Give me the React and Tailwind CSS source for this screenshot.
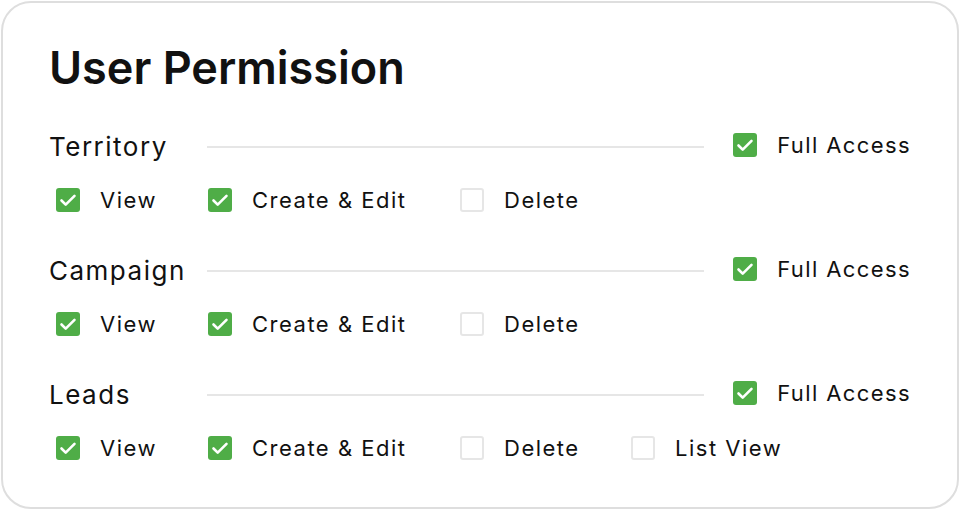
import React from "react";

const sections = [
  { name: "Territory", perms: [["View", true], ["Create & Edit", true], ["Delete", false]] },
  { name: "Campaign", perms: [["View", true], ["Create & Edit", true], ["Delete", false]] },
  { name: "Leads", perms: [["View", true], ["Create & Edit", true], ["Delete", false], ["List View", false]] },
];

// 項目ごとの幅（チェックボックスの開始位置をそろえる）
const itemWidths = ["w-[152px]", "w-[252px]", "w-[171px]", "w-[160px]"];

const Check = ({ on }) =>
  on ? (
    <span className="flex h-6 w-6 shrink-0 items-center justify-center rounded-[3px] bg-[#4fad47]">
      <svg width="24" height="24" viewBox="0 0 24 24" fill="none">
        <path d="M5.5 12.5l4.2 4.2 8.8-8.8" stroke="#fff" strokeWidth="2.6" strokeLinecap="round" strokeLinejoin="round" />
      </svg>
    </span>
  ) : (
    <span className="h-6 w-6 shrink-0 rounded-[3px] border-2 border-[#e6e6e6] bg-white" />
  );

export default function App() {
  return (
    <div className="h-[510px] w-[960px] bg-white p-px font-['Inter',sans-serif] text-[#111]">
      <div className="h-full rounded-[30px] border-2 border-[#dedede] pl-[46px] pr-[46px] pt-[40px]">
        <h1 className="h-[50px] text-[45px] font-semibold leading-[50px]">User Permission</h1>
        {sections.map((s, i) => (
          <div key={s.name} className={i === 0 ? "mt-[39px]" : "mt-[44px]"}>
            <div className="flex h-[30px] items-center">
              <div className="w-[158px] text-[26px] leading-[30px] tracking-[1.5px]">{s.name}</div>
              <div className="h-[2px] flex-1 bg-[#e6e6e6]" />
              <div className="mb-[4px] ml-[29px] flex items-center gap-5">
                <Check on />
                <span className="text-[22px] leading-[26px] tracking-[1.4px]">Full Access</span>
              </div>
            </div>
            <div className="mt-[26px] flex h-6 items-center pl-[7px]">
              {s.perms.map(([label, on], j) => (
                <div key={label} className={`flex items-center gap-5 ${itemWidths[j]}`}>
                  <Check on={on} />
                  <span className="text-[22px] leading-6 tracking-[1.5px]">{label}</span>
                </div>
              ))}
            </div>
          </div>
        ))}
      </div>
    </div>
  );
}
